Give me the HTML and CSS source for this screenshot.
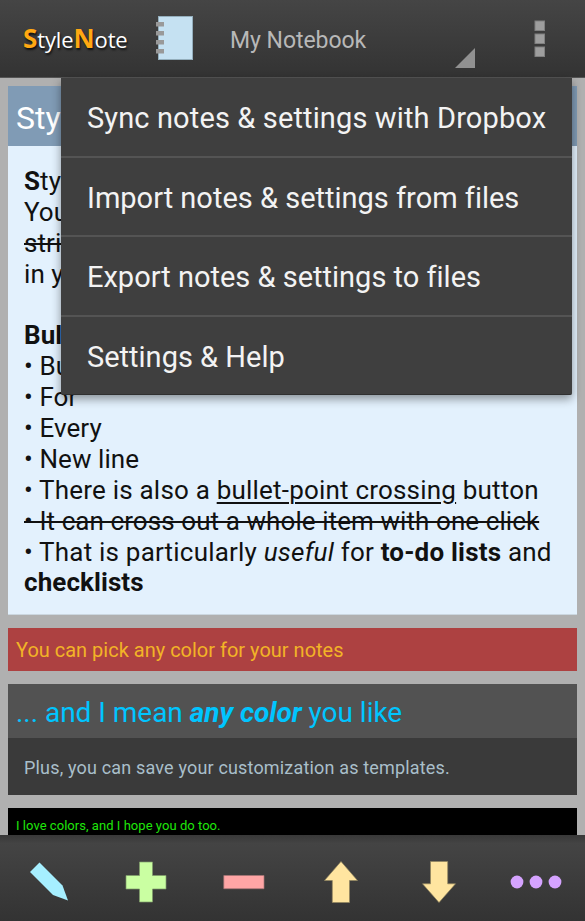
FILE: index.html
```html
<!DOCTYPE html>
<html lang="en">
<head>
<meta charset="utf-8">
<title>StyleNote</title>
<link rel="stylesheet" href="styles.css">
</head>
<body>
<div class="app">
  <header class="topbar">
    <div class="brand"><b>S</b>tyle<b>N</b>ote</div>
    <svg class="notebook" width="38" height="46" viewBox="0 0 38 46">
      <rect x="2.5" y="1.5" width="34" height="43" fill="#c5e1f2" stroke="#94aebc"/>
      <g fill="#999">
        <rect y="7" width="8" height="4.5"/><rect y="16" width="8" height="4.5"/>
        <rect y="25" width="8" height="4.5"/><rect y="34" width="8" height="4.5"/>
      </g>
    </svg>
    <div class="spinner"><span class="spinner-text">My Notebook</span>
      <svg class="corner" width="20" height="20" viewBox="0 0 20 20"><path d="M0 20L20 0V20Z" fill="#919191"/></svg>
    </div>
    <svg class="overflow" width="12" height="38" viewBox="0 0 12 38">
      <g fill="#9e9e9e" stroke="#808080"><rect x="1" y="1" width="9.5" height="9.5"/><rect x="1" y="14" width="9.5" height="9.5"/><rect x="1" y="27" width="9.5" height="9.5"/></g>
    </svg>
    <nav class="menu">
      <a class="item first">Sync notes &amp; settings with Dropbox</a>
      <a class="item">Import notes &amp; settings from files</a>
      <a class="item">Export notes &amp; settings to files</a>
      <a class="item">Settings &amp; Help</a>
    </nav>
  </header>
  <main class="notes">
    <article class="note blue">
      <h2>Sty</h2>
      <div class="text">
        <div><b>S</b>ty</div>
        <div>You</div>
        <div><s>stri</s></div>
        <div>in y</div>
        <div><br></div>
        <div><b>Bul</b></div>
        <div>• Bu</div>
        <div>• For</div>
        <div>• Every</div>
        <div>• New line</div>
        <div class="wide">• There is also a <u>bullet-point crossing</u> button</div>
        <div><s>• It can cross out a whole item with one click</s></div>
        <div class="wide">• That is particularly <i>useful</i> for <b>to-do lists</b> and</div>
        <div><b>checklists</b></div>
      </div>
    </article>
    <article class="note red">You can pick any color for your notes</article>
    <article class="note gray">
      <h2>... and I mean <b><i>any color</i></b> you like</h2>
      <p>Plus, you can save your customization as templates.</p>
    </article>
    <article class="note black">I love colors, and I hope you do too.</article>
  </main>
  <footer class="toolbar">
    <span class="tool"><svg width="42" height="42" viewBox="0 0 42 42"><path d="M11.5 1.5L34.5 24.5L40 39.5L25 34L2 11Z" fill="#a6efff"/></svg></span>
    <span class="tool"><svg width="42" height="42" viewBox="0 0 42 42"><path d="M14.5 1H27.5V14.5H41V28H27.5V41H14.5V28H1V14.5H14.5Z" fill="#caffa2" stroke="#7f9b6a" stroke-width=".7"/></svg></span>
    <span class="tool"><svg width="42" height="42" viewBox="0 0 42 42"><path d="M.8 14.5H41V27.7H.8Z" fill="#ffa5a5" stroke="#a67575" stroke-width=".7"/></svg></span>
    <span class="tool"><svg width="42" height="42" viewBox="0 0 42 42"><path d="M21 .5L37.5 19.5H29.5V41.5H12.3V19.5H4.5Z" fill="#ffe5a0" stroke="#8f845f" stroke-width=".7"/></svg></span>
    <span class="tool"><svg width="42" height="42" viewBox="0 0 42 42"><path d="M21 41.5L37.5 22.8H29.7V.5H12.5V22.8H4.5Z" fill="#ffe5a0" stroke="#8f845f" stroke-width=".7"/></svg></span>
    <span class="tool"><svg width="52" height="42" viewBox="0 0 52 42"><g fill="#d5a3ff"><circle cx="7" cy="21" r="6.4"/><circle cx="26" cy="21" r="6.4"/><circle cx="45" cy="21" r="6.4"/></g></svg></span>
  </footer>
</div>
</body>
</html>
```
FILE: styles.css
```css
* { box-sizing: border-box; }
body { margin: 0; font-family: Roboto, sans-serif; font-variant-ligatures: none; }
.app { width: 585px; height: 921px; display: flex; flex-direction: column; overflow: hidden; background: #b0b0b0; }
.topbar { position: relative; z-index: 2; flex: none; height: 78px; display: flex; align-items: center; padding: 0 39px 0 23px; background: linear-gradient(#454545, #333); border-bottom: 1px solid #555; }
.brand { width: 133px; font: 22px "Open Sans", sans-serif; line-height: 30px; color: #fff; text-shadow: 1px 2px 2px #111; white-space: nowrap; letter-spacing: -0.12px; }
.brand b { color: #ffa812; font-size: 26px; }
.notebook { flex: none; margin-bottom: 1px; }
.spinner { flex: 1; display: flex; justify-content: space-between; align-items: center; height: 78px; margin-left: 36px; color: #b8b8b8; font-size: 23px; letter-spacing: -0.05px; }
.spinner-text { padding-top: 3px; }
.corner { align-self: flex-end; margin: 0 59px 10px 0; }
.overflow { flex: none; }
.menu { position: absolute; left: 61px; top: 78px; width: 511px; height: 317px; background: #3f3f3f; border-bottom: 1px solid #303030; border-radius: 0 0 2px 2px; box-shadow: 0 4px 10px rgba(0,0,0,.4); }
.item { display: flex; align-items: center; height: 79.7px; padding: 2px 0 0 26px; color: #f3f3f3; font-size: 29px; white-space: nowrap; border-bottom: 2px solid #545454; }
.first { letter-spacing: .13px; }
.item:last-child { border: 0; height: 77px; }
.notes { flex: 1; min-height: 0; overflow: hidden; padding: 8px; display: flex; flex-direction: column; gap: 13px; }
.note { flex: none; white-space: nowrap; }
.note h2 { margin: 0; font-weight: 400; padding-left: 8px; }
.blue { height: 529px; background: #e3f1fd; border-bottom: 1px solid #cbd7e0; }
.blue h2 { height: 60px; line-height: 64px; font-size: 32px; background: #809bb5; color: #fff; }
.text { padding: 20px 16px; font-size: 26px; line-height: 30.87px; color: #111; letter-spacing: .08px; }
.wide { letter-spacing: .2px; }
.text s, .text u { text-decoration-thickness: 2px; }
.text u { text-underline-offset: 3px; }
.red { height: 43px; line-height: 44px; padding-left: 8px; font-size: 20px; background: #ad4141; color: #f2b327; }
.gray { height: 111px; background: #3a3a3a; }
.gray h2 { height: 54px; line-height: 57px; font-size: 28px; letter-spacing: -.03px; background: #525252; color: #00c5ff; }
.gray p { margin: 0; padding-left: 16px; line-height: 59px; font-size: 18px; letter-spacing: .17px; color: #a9bfca; }
.black { height: 50px; padding-left: 8px; line-height: 35px; font-size: 13px; letter-spacing: .04px; background: #000; color: #1fe60a; }
.toolbar { flex: none; height: 86px; display: grid; grid-template-columns: repeat(6, 1fr); background: linear-gradient(#383838, #444 10%, #333); padding-top: 8px; }
.tool { display: flex; align-items: center; justify-content: center; }
```
